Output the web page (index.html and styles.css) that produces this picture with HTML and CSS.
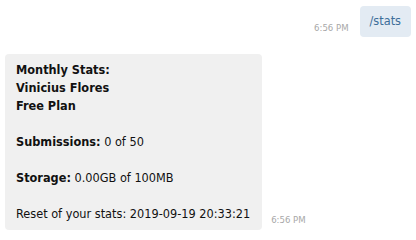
FILE: index.html
```html
<!DOCTYPE html>
<html>
<head>
<meta charset="utf-8">
<link rel="stylesheet" href="styles.css">
</head>
<body>
<div class="chat">
  <div class="row row-out">
    <span class="time">6:56 PM</span>
    <div class="bubble bubble-out">/stats</div>
  </div>
  <div class="row row-in">
    <div class="bubble bubble-in">
      <div><b>Monthly Stats:</b></div>
      <div><b>Vinicius Flores</b></div>
      <div><b>Free Plan</b></div>
      <div class="blank"></div>
      <div><b>Submissions:</b> 0 of 50</div>
      <div class="blank"></div>
      <div><b>Storage:</b> 0.00GB of 100MB</div>
      <div class="blank"></div>
      <div>Reset of your stats: 2019-09-19 20:33:21</div>
    </div>
    <span class="time">6:56 PM</span>
  </div>
</div>
</body>
</html>
```
FILE: styles.css
```css
html, body {
  margin: 0;
  padding: 0;
  background: #ffffff;
}
.chat {
  display: flex;
  flex-direction: column;
  gap: 17px;
  padding: 6px 5px 0 5px;
  font-family: "DejaVu Sans Condensed", "DejaVu Sans", sans-serif;
  font-size: 12.6px;
  color: #111;
}
.row {
  display: flex;
  align-items: flex-end;
}
.row-out {
  justify-content: flex-end;
  gap: 11px;
}
.row-in {
  justify-content: flex-start;
  gap: 9px;
}
.bubble {
  border-radius: 4px;
  line-height: 18px;
}
.bubble-out {
  background: #e3ebf3;
  color: #3d6e9a;
  padding: 6px 10px 7px 10px;
}
.bubble-in {
  background: #f0f0f0;
  padding: 7px 12px 7px 11px;
}
.blank {
  height: 18px;
}
b {
  font-weight: bold;
}
.time {
  font-size: 9.5px;
  color: #a8a8a8;
  line-height: 12px;
}
.row-out .time {
  margin-bottom: 3px;
}
.row-in .time {
  margin-bottom: 4px;
}
```
